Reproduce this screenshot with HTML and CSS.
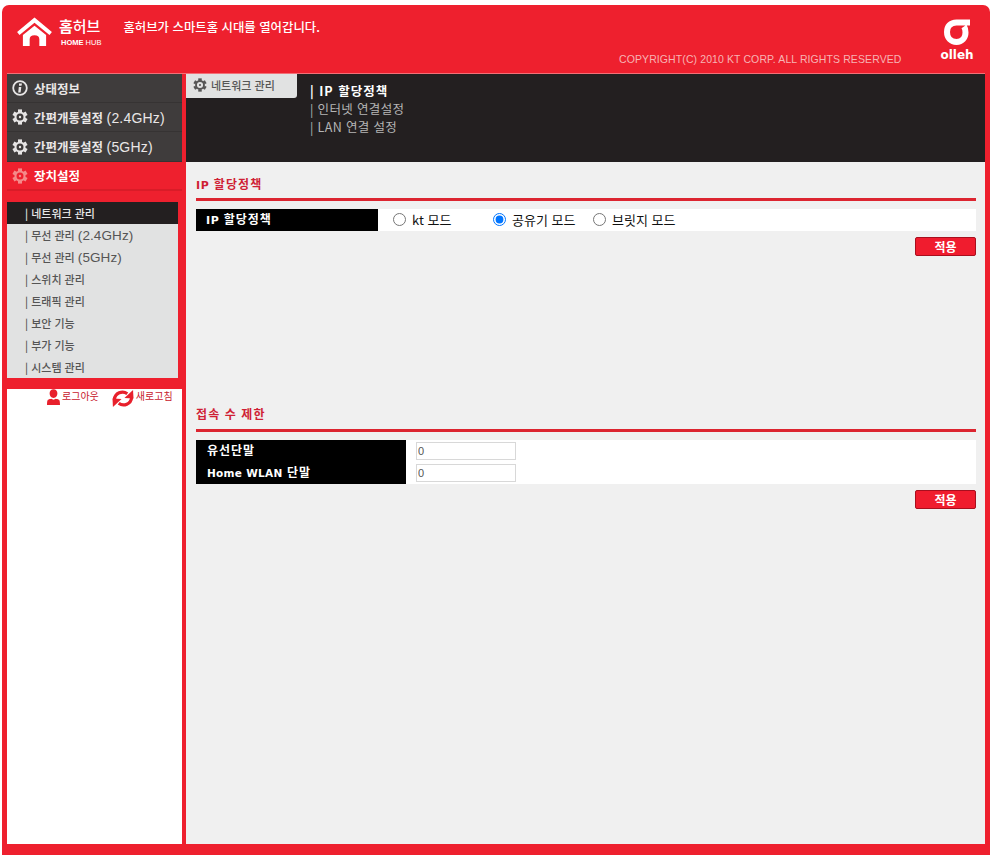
FILE: index.html
```html
<!DOCTYPE html>
<html lang="ko">
<head>
<meta charset="utf-8">
<title>홈허브</title>
<link rel="stylesheet" href="styles.css">
</head>
<body>
<svg class="defs" width="0" height="0">
  <defs>
    <symbol id="gear" viewBox="0 0 16 16">
      <g fill="currentColor">
        <path fill-rule="evenodd" d="M8 2.400a5.600 5.600 0 1 1 0 11.200 5.600 5.600 0 0 1 0-11.200zM8 4.500a3.500 3.500 0 1 0 0 7 3.500 3.500 0 0 0 0-7z"/>
        <rect x="6" y="0.400" width="4" height="2.600"/>
        <rect x="6" y="0.400" width="4" height="2.600" transform="rotate(60 8 8)"/>
        <rect x="6" y="0.400" width="4" height="2.600" transform="rotate(120 8 8)"/>
        <rect x="6" y="0.400" width="4" height="2.600" transform="rotate(180 8 8)"/>
        <rect x="6" y="0.400" width="4" height="2.600" transform="rotate(240 8 8)"/>
        <rect x="6" y="0.400" width="4" height="2.600" transform="rotate(300 8 8)"/>
        <circle cx="8" cy="8" r="1.200"/>
      </g>
    </symbol>
  </defs>
</svg>
<div class="frame">
  <header class="top">
    <div class="brand">
      <svg class="house" viewBox="0 0 36 30" width="35" height="29">
        <path fill="#fff" d="M18 0.500 L36 15.500 L33.500 18.500 L18 6 L2.500 18.500 L0 15.500Z"/>
        <path fill="#fff" d="M18 9 L30 18.500 V30 H23 V23 Q23 19 18 19 Q13 19 13 23 V30 H6 V18.500Z"/>
      </svg>
      <div class="brand-text">
        <span class="brand-ko">홈<span class="thin">허브</span></span>
        <span class="brand-en"><b>HOME</b> HUB</span>
      </div>
    </div>
    <p class="slogan">홈허브가 스마트홈 시대를 열어갑니다.</p>
    <p class="copyright">COPYRIGHT(C) 2010 KT CORP. ALL RIGHTS RESERVED</p>
    <div class="olleh">
      <svg viewBox="0 0 26 26" width="26" height="26">
        <path fill="none" stroke="#fff" stroke-width="6" d="M26 3.500 H12.500 C6.500 3.500 3 7.500 3 13 C3 19 7 23 12.500 23 C18 23 21.500 19 21.500 13.500 C21.500 11 21 9 20 7.500"/>
      </svg>
      <span>olleh</span>
    </div>
  </header>
  <div class="body">
    <aside class="side">
      <nav class="menu">
        <a class="menu-item first">
          <svg class="mi" viewBox="0 0 16 16"><circle cx="8" cy="8" r="6.800" fill="none" stroke="#e8e6e6" stroke-width="1.800"/><path fill="#e8e6e6" d="M7 3.600h3l-.5 2.200h-2.500zM6.800 7h2.500L8.600 12.500H6.200z"/></svg>
          <span>상태정보</span>
        </a>
        <a class="menu-item">
          <svg class="mi gear"><use href="#gear"/></svg>
          <span>간편개통설정 <i class="en">(2.4GHz)</i></span>
        </a>
        <a class="menu-item">
          <svg class="mi gear"><use href="#gear"/></svg>
          <span>간편개통설정 <i class="en">(5GHz)</i></span>
        </a>
        <a class="menu-item active">
          <svg class="mi gear"><use href="#gear"/></svg>
          <span>장치설정</span>
        </a>
      </nav>
      <ul class="sub">
        <li class="on">| 네트워크 관리</li>
        <li>| 무선 관리 <i class="en">(2.4GHz)</i></li>
        <li>| 무선 관리 <i class="en">(5GHz)</i></li>
        <li>| 스위치 관리</li>
        <li>| 트래픽 관리</li>
        <li>| 보안 기능</li>
        <li>| 부가 기능</li>
        <li>| 시스템 관리</li>
      </ul>
      <div class="tools">
        <a class="tool logout">
          <svg viewBox="0 0 14 18" width="13" height="17"><path fill="#e8202c" d="M7 0c2.600 0 4.200 1.800 4.200 4.500S9.800 9.500 7 9.500 2.800 7.200 2.800 4.500 4.400 0 7 0zM1 11.500c1.200-.8 2.500-1 3.500-1.200L7 11.500l2.500-1.200c1 .2 2.300.4 3.500 1.200.7.500 1 3 1 5.500H0c0-2.500.3-5 1-5.500z"/></svg>
          <span>로그아웃</span>
        </a>
        <a class="tool refresh">
          <svg viewBox="0 0 23 19" width="22" height="19">
            <g>
              <path fill="none" stroke="#e8202c" stroke-width="3.400" d="M2.500 10.500 A8.500 8.500 0 0 1 16 4.500"/>
              <path fill="#e8202c" d="M22 0.500 L22.500 9.500 L13 9z"/>
            </g>
            <g transform="rotate(180 11.500 9.500)">
              <path fill="none" stroke="#e8202c" stroke-width="3.400" d="M2.500 10.500 A8.500 8.500 0 0 1 16 4.500"/>
              <path fill="#e8202c" d="M22 0.500 L22.500 9.500 L13 9z"/>
            </g>
          </svg>
          <span>새로고침</span>
        </a>
      </div>
    </aside>
    <main class="main">
      <div class="subhead">
        <div class="tab">
          <svg class="tab-gear"><use href="#gear"/></svg>
          <span>네트워크 관리</span>
        </div>
        <ul class="crumbs">
          <li class="on">| IP 할당정책</li>
          <li>| 인터넷 연결설정</li>
          <li>| LAN 연결 설정</li>
        </ul>
      </div>
      <div class="content">
        <section class="sec sec-ip">
          <h2 class="sec-title"><i class="lat">IP</i> 할당정책</h2>
          <div class="form-row">
            <div class="labels w182"><div class="lab"><i class="lat">IP</i> 할당정책</div></div>
            <div class="radios">
              <label class="r r1"><input type="radio" name="m"> kt 모드</label>
              <label class="r r2"><input type="radio" name="m" checked> 공유기 모드</label>
              <label class="r"><input type="radio" name="m"> 브릿지 모드</label>
            </div>
          </div>
          <div class="btn-row"><button class="apply">적용</button></div>
        </section>
        <section class="sec sec-limit">
          <h2 class="sec-title">접속 수 제한</h2>
          <div class="form-row">
            <div class="labels w210">
              <div class="lab">유선단말</div>
              <div class="lab"><i class="lat tight">Home WLAN</i> 단말</div>
            </div>
            <div class="inputs">
              <input class="txt" type="text" value="0">
              <input class="txt" type="text" value="0">
            </div>
          </div>
          <div class="btn-row"><button class="apply">적용</button></div>
        </section>
      </div>
    </main>
  </div>
</div>
</body>
</html>
```
FILE: styles.css
```css
* { box-sizing: border-box; }
html, body { margin: 0; padding: 0; background: #fff; }
body { font-family: "Noto Sans CJK KR", "Liberation Sans", sans-serif; height: 863px; overflow: hidden; }
.defs { position: absolute; }
ul { list-style: none; margin: 0; padding: 0; }
h2, p { margin: 0; }
i { font-style: normal; }

.frame {
  margin: 5px 2px 0;
  width: 988px;
  height: 850px;
  background: #ee202e;
  border-radius: 7px 7px 0 0;
  display: flex;
  flex-direction: column;
}

.top {
  height: 69px;
  display: flex;
  position: relative;
  border-bottom: 1px solid #f27078;
  margin-left: 5px;
  margin-right: 5px;
  flex: none;
  color: #fff;
}
.brand { display: flex; margin-left: 10px; padding-top: 12px; }
.brand-text { display: flex; flex-direction: column; margin-left: 7px; margin-top: -2px; }
.brand-ko { font-size: 15px; font-weight: 700; line-height: 22px; white-space: nowrap; }
.thin { font-weight: 500; }
.brand-en { font: 400 7.500px/10px "Liberation Sans", sans-serif; margin-top: 1px; margin-left: 2px; white-space: nowrap; }
.slogan { font-size: 12.400px; font-weight: 500; line-height: 18px; margin-left: 22px; padding-top: 13px; white-space: nowrap; }
.copyright {
  position: absolute;
  left: 612px;
  top: 48px;
  font: 400 10.500px/12px "Liberation Sans", sans-serif;
  color: #f7b4b4;
  letter-spacing: .1px;
  white-space: nowrap;
}
.olleh {
  position: absolute;
  right: 12px;
  top: 14px;
  width: 32px;
  display: flex;
  flex-direction: column;
  align-items: center;
}
.olleh span { font: 700 12px/11px "DejaVu Sans", sans-serif; margin-top: 5px; }

.body {
  flex: 1;
  display: flex;
  padding: 0 5px 11px;
  min-height: 0;
}

.side { width: 175px; margin-right: 4px; display: flex; flex-direction: column; flex: none; }
.menu { display: flex; flex-direction: column; }
.menu-item {
  height: 29px;
  background: #3f3c3c;
  border-bottom: 1px solid #363333;
  color: #e9e6e6;
  display: flex;
  align-items: center;
  padding-left: 5px;
  font-size: 12.500px;
  font-weight: 700;
}
.menu-item span { margin-left: 6px; white-space: nowrap; }
.menu-item .en { font: 400 14px/16px "Liberation Sans", sans-serif; letter-spacing: .2px; }
.menu-item:nth-child(3) { height: 30px; }
.menu-item.active {
  background: #ee202e;
  height: 29px;
  color: #fff;
  font-weight: 700;
  border-bottom: 2px solid #d91c28;
}
.mi { width: 16px; height: 16px; flex: none; }
.gear { color: #e8e6e6; }
.active .gear { color: #f48a8a; }

.sub {
  margin-top: 11px;
  width: 171px;
  height: 176px;
  background: #e1e2e2;
  font-size: 11px;
  font-weight: 500;
  color: #555;
}
.sub li { height: 22px; line-height: 22px; padding-left: 18px; white-space: nowrap; }
.sub .en { font: 400 13.500px/16px "Liberation Sans", sans-serif; letter-spacing: .1px; }
.sub li.on { background: #231f20; color: #e8e8e8; }

.tools {
  margin-top: 11px;
  flex: 1;
  background: #fff;
  display: flex;
  align-items: flex-start;
  padding-left: 40px;
  font-size: 10px;
  color: #c8202c;
}
.tool { display: flex; align-items: flex-start; white-space: nowrap; }
.tool span { line-height: 14px; margin-left: 2px; }
.tool.refresh { margin-left: 13px; }

.main { flex: 1; background: #f0f0f0; display: flex; flex-direction: column; min-width: 0; }
.subhead { height: 88px; background: #231f20; display: flex; flex: none; }
.tab {
  width: 111px;
  height: 24px;
  background: #e1e2e2;
  border-radius: 0 0 3px 0;
  display: flex;
  align-items: center;
  padding: 0 0 2px 7px;
  font-size: 11px;
  font-weight: 500;
  color: #555;
}
.tab span { margin-left: 4px; white-space: nowrap; }
.tab-gear { width: 14px; height: 14px; color: #555; flex: none; }
.crumbs { margin-left: 13px; padding-top: 8px; font-size: 12.500px; color: #b5b5b5; }
.crumbs li { line-height: 18px; height: 18px; letter-spacing: .35px; }
.crumbs li.on { color: #fff; font-weight: 700; letter-spacing: 1px; }

.content { padding: 0 9px 0 10px; flex: 1; }
.sec-title {
  font: 700 12px/14px "Noto Sans CJK KR", sans-serif;
  color: #cf1f35;
  height: 24px;
  border-bottom: 3px solid #dc2530;
  letter-spacing: 1.100px;
}
.lat { font: 700 11px/14px "DejaVu Sans", sans-serif; letter-spacing: .6px; }
.lat.tight { font-size: 10.500px; letter-spacing: .3px; }
.sec-ip { padding-top: 15px; height: 245px; }
.sec-limit .sec-title { height: 25px; }
.form-row { display: flex; background: #fff; margin-top: 8px; }
.labels { background: #000; color: #fff; font: 700 12px/20px "Noto Sans CJK KR", sans-serif; letter-spacing: 1px; flex: none; }
.w182 { width: 182px; padding-left: 10px; }
.w210 { width: 210px; padding-left: 11px; }
.lab { height: 22px; white-space: nowrap; }
.radios { display: flex; align-items: center; font-size: 13px; color: #111; height: 22px; padding-left: 15px; }
.r { display: flex; align-items: center; white-space: nowrap; gap: 6px; padding-bottom: 2px; }
.r input { width: 13px; height: 13px; margin: 0; accent-color: #0075ff; }
.r1 { width: 100px; }
.r2 { width: 100px; }
.inputs { display: flex; flex-direction: column; padding-left: 10px; }
.txt {
  width: 100px;
  height: 18px;
  margin: 2px 0;
  border: 1px solid #d8d8d8;
  background: #fff;
  color: #555;
  font: 400 11px/16px "Liberation Sans", sans-serif;
  padding: 0 1px;
}
.btn-row { display: flex; justify-content: flex-end; margin-top: 6px; }
.apply {
  width: 61px;
  height: 19px;
  padding: 0;
  background: #f01c2e;
  border: 1px solid #a80f1e;
  border-radius: 2px;
  color: #fff;
  font: 700 12px/15px "Noto Sans CJK KR", sans-serif;
}
```
